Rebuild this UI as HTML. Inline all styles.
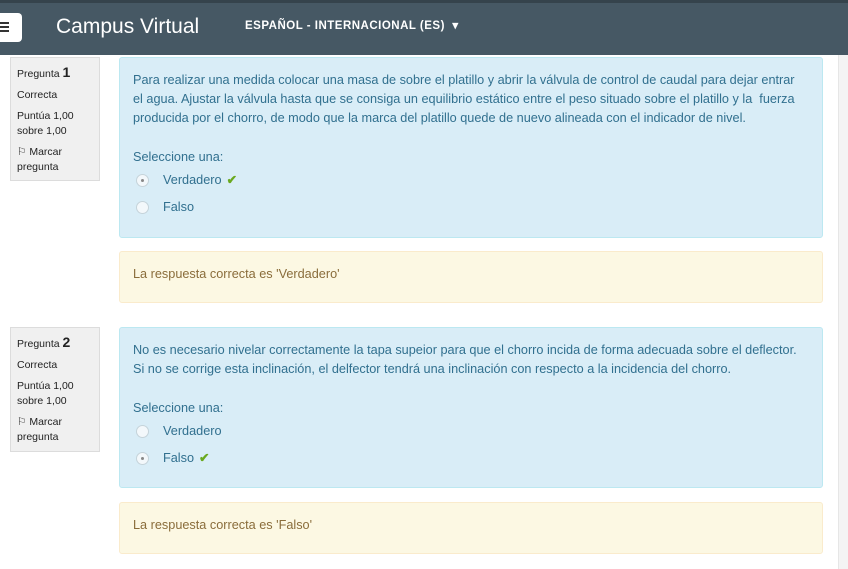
<!DOCTYPE html>
<html><head><meta charset="utf-8"><style>
*{margin:0;padding:0;box-sizing:border-box}
body{width:848px;height:569px;overflow:hidden;background:#fff;font-family:"Liberation Sans",sans-serif;position:relative}
.nav{position:absolute;left:0;top:0;width:848px;height:55px;background:#465864;border-top:3px solid #35434c}
.btn{position:absolute;left:-8px;top:10px;width:30px;height:29px;background:#fff;border-radius:4px}
.btn span{position:absolute;left:8px;width:9px;height:2px;background:#333}
.brand{position:absolute;left:56px;top:12px;color:#fff;font-size:21px}
.lang{position:absolute;left:245px;top:15px;color:#fff;font-size:11.5px;font-weight:bold;letter-spacing:.5px}
.side{position:absolute;left:838px;top:55px;width:10px;height:514px;background:#f4f4f4;border-left:1px solid #e6e6e6}
.info{position:absolute;left:10px;width:90px;background:#f0f0f0;border:1px solid #dcdcdc;padding:7px 6px;font-size:10.5px;color:#222;line-height:15px}
.info b{font-size:14px}
.info p{margin-bottom:6px}
.q{position:absolute;left:119px;width:704px;background:#d9edf7;border:1px solid #bce8f1;border-radius:3px;padding:13px 0 9px 13px;color:#31708f;font-size:12.7px;line-height:19px;white-space:nowrap}
.fb{position:absolute;left:119px;width:704px;height:52px;background:#fcf8e3;border:1px solid #faebcc;border-radius:3px;padding:15px 13px;color:#8a6d3b;font-size:12.7px}
.opt{height:27px;display:flex;align-items:center}
.r{display:inline-block;width:13px;height:13px;border:1px solid #c5d3da;border-radius:50%;background:#f3f8fb;margin:0 14px 0 3px;position:relative}
.r.s::after{content:"";position:absolute;left:4px;top:4px;width:3px;height:3px;border-radius:50%;background:#888}
.ck{color:#6aa91f;margin-left:5px;font-weight:bold}
</style></head><body>
<div class="nav">
<div class="btn"><span style="top:9px"></span><span style="top:13px"></span><span style="top:17px"></span></div>
<div class="brand">Campus Virtual</div>
<div class="lang">ESPAÑOL - INTERNACIONAL (ES) &nbsp;▾</div>
</div>
<div class="side"></div>

<div class="info" style="top:57px;height:124px"><p>Pregunta <b>1</b></p><p>Correcta</p><p>Puntúa 1,00 sobre 1,00</p><p>⚐ Marcar pregunta</p></div>
<div class="q" style="top:57px;height:181px">Para realizar una medida colocar una masa de sobre el platillo y abrir la válvula de control de caudal para dejar entrar<br>el agua. Ajustar la válvula hasta que se consiga un equilibrio estático entre el peso situado sobre el platillo y la &nbsp;fuerza<br>producida por el chorro, de modo que la marca del platillo quede de nuevo alineada con el indicador de nivel.
<div style="margin-top:20px">Seleccione una:</div>
<div class="opt"><span class="r s"></span>Verdadero<span class="ck">✔</span></div>
<div class="opt"><span class="r"></span>Falso</div></div>
<div class="fb" style="top:251px">La respuesta correcta es 'Verdadero'</div>

<div class="info" style="top:327px;height:125px"><p>Pregunta <b>2</b></p><p>Correcta</p><p>Puntúa 1,00 sobre 1,00</p><p>⚐ Marcar pregunta</p></div>
<div class="q" style="top:327px;height:161px">No es necesario nivelar correctamente la tapa supeior para que el chorro incida de forma adecuada sobre el deflector.<br>Si no se corrige esta inclinación, el delfector tendrá una inclinación con respecto a la incidencia del chorro.
<div style="margin-top:20px">Seleccione una:</div>
<div class="opt"><span class="r"></span>Verdadero</div>
<div class="opt"><span class="r s"></span>Falso<span class="ck">✔</span></div></div>
<div class="fb" style="top:502px">La respuesta correcta es 'Falso'</div>
</body></html>
